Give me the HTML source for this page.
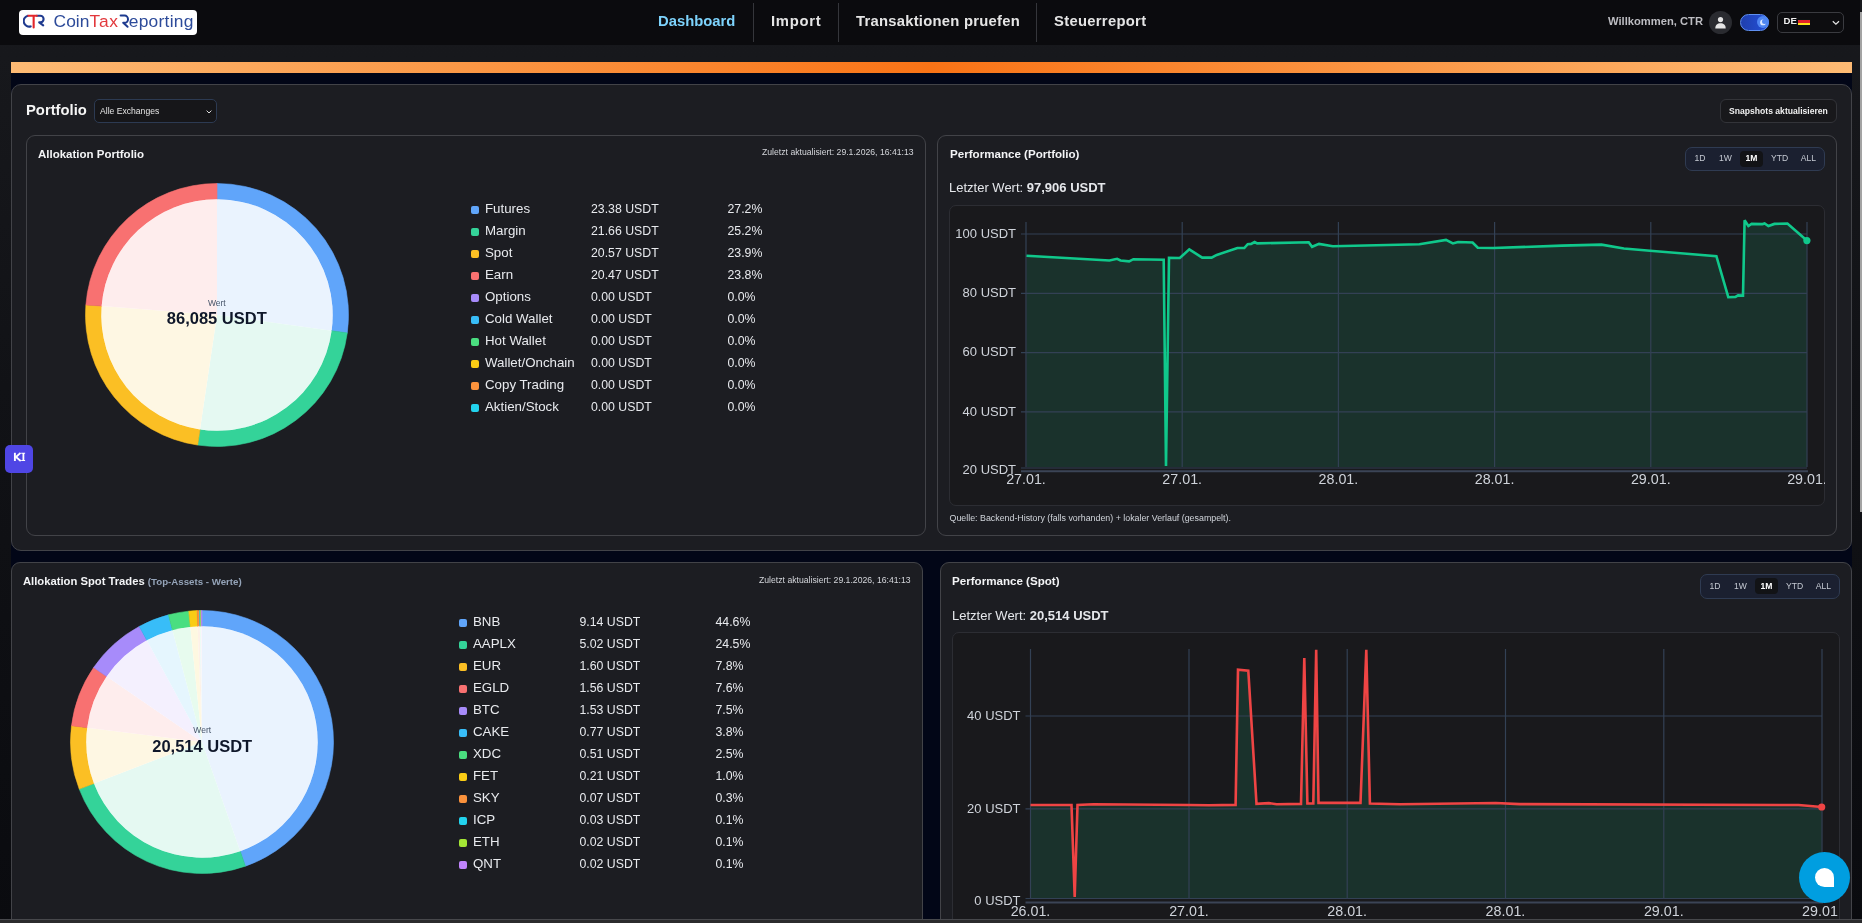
<!DOCTYPE html>
<html><head><meta charset="utf-8">
<style>
*{box-sizing:border-box;margin:0;padding:0}
html,body{width:1862px;height:923px;overflow:hidden;background:linear-gradient(180deg,#18191d 0,#111216 42%,#0a0b0f 100%);font-family:"Liberation Sans",sans-serif;color:#f3f4f6}
.a{position:absolute}
#wrap{position:absolute;left:0;top:0;width:1862px;height:923px;will-change:transform}
#hdr{left:0;top:0;width:1860px;height:45px;background:#0b0b0e}
.nav{top:13px;font-weight:bold;font-size:14.8px;color:#e5e5e5;white-space:nowrap;line-height:17px}
.sep{top:3px;width:1px;height:39px;background:#35363b}
.card{border:1px solid #424348;border-radius:9px;background:#1c1d22}
.t{white-space:nowrap;line-height:1}
.lg{font-size:13.3px;color:#e8eaee;white-space:nowrap;line-height:1}
.lv{font-size:12.3px}
.dot{width:8px;height:8px;border-radius:2px}
.seg{border:1px solid #2f3b52;background:#1b2030;border-radius:7px}
.seg span{position:absolute;top:6px;font-size:8.6px;color:#c5c9d2;line-height:1;transform:translateX(-50%)}
.seg .on{background:#121316;border-radius:4px}
.cbox{border:1px solid #2c2d33;border-radius:7px;background:#19191c;overflow:hidden}
.ax{font-size:13px;fill:#cfd3da;font-family:"Liberation Sans",sans-serif}
</style></head><body><div id="wrap">
<!-- header -->
<div id="hdr" class="a"></div>
<div class="a" style="left:19px;top:10px;width:178px;height:25px;background:#fff;border-radius:4px"></div>
<svg class="a" style="left:23px;top:13px" width="22" height="16" viewBox="0 0 22 16">
 <path d="M4.8 2.7 A5.5 5.5 0 0 0 7.7 13.4" fill="none" stroke="#1f3a8f" stroke-width="2.1" stroke-linecap="round"/>
 <path d="M13.8 2.8 H17.3 A3.3 3.3 0 0 1 17.3 9.4 H16.2 L20.2 12.4" fill="none" stroke="#1f3a8f" stroke-width="2.1" stroke-linecap="round" stroke-linejoin="round"/>
 <path d="M5.4 2.8 H13.8 M10.65 2.8 V14.5" fill="none" stroke="#e3262b" stroke-width="2.1" stroke-linecap="round"/>
</svg>
<div class="a t" style="left:53.6px;top:13px;font-size:17.4px;color:#2d4b9a">Coin</div>
<div class="a t" style="left:89.6px;top:13px;font-size:17.4px;color:#e2383c;letter-spacing:0.7px">Tax</div>
<div class="a t" style="left:128.8px;top:13px;font-size:17.4px;color:#2d4b9a;letter-spacing:0.24px">eporting</div>
<svg class="a" style="left:118px;top:13px" width="14" height="16" viewBox="118 13 14 16"><path d="M120.6 15.6 H124.6 A3.4 3.6 0 0 1 124.6 22.8 H123.2 L127.6 26.8" fill="none" stroke="#1d3a8f" stroke-width="2.0" stroke-linecap="round" stroke-linejoin="round"/></svg>

<div class="a nav" style="left:658px;color:#7dd3fc">Dashboard</div>
<div class="a sep" style="left:753px"></div>
<div class="a nav" style="left:771px;letter-spacing:0.75px">Import</div>
<div class="a sep" style="left:838px"></div>
<div class="a nav" style="left:856px;letter-spacing:0.25px">Transaktionen pruefen</div>
<div class="a sep" style="left:1036px"></div>
<div class="a nav" style="left:1054px;letter-spacing:0.3px">Steuerreport</div>

<div class="a t" style="left:1608px;top:16px;font-size:11.2px;font-weight:bold;color:#bdbdc2">Willkommen, CTR</div>
<div class="a" style="left:1709px;top:11px;width:23px;height:23px;border-radius:50%;background:#2a2b30"></div>
<svg class="a" style="left:1709px;top:11px" width="23" height="23" viewBox="0 0 23 23">
 <circle cx="11.5" cy="8.6" r="2.6" fill="#e5e5e5"/>
 <path d="M6.3 17.5 C6.3 13.8 8.5 12.3 11.5 12.3 C14.5 12.3 16.7 13.8 16.7 17.5 Z" fill="#e5e5e5"/>
</svg>
<div class="a" style="left:1740px;top:14px;width:29px;height:17px;border-radius:9px;border:1px solid #5f8ff0;background:linear-gradient(90deg,#1f3fae,#2450d8)"></div>
<div class="a" style="left:1757px;top:15.5px;width:12px;height:12px;border-radius:50%;background:#4f86f2"></div>
<svg class="a" style="left:1757px;top:16px" width="12" height="12" viewBox="0 0 12 12"><circle cx="6" cy="6.4" r="2.9" fill="#dbe7ff"/><circle cx="7.5" cy="5.6" r="2.5" fill="#4f86f2"/></svg>
<div class="a" style="left:1777px;top:12px;width:67px;height:21px;border:1px solid #3a3b40;border-radius:5px;background:#0d0d10"></div>
<div class="a t" style="left:1783.5px;top:16.2px;font-size:9.6px;font-weight:bold;color:#f0f0f0">DE</div>
<div class="a" style="left:1798px;top:18.6px;width:12px;height:6.6px;background:linear-gradient(#0d1212 0 20%,#e52329 20% 62%,#fde21a 62%)"></div>
<svg class="a" style="left:1831px;top:19px" width="10" height="7" viewBox="0 0 10 7"><path d="M1.8 2.2 L4.9 5.2 L8 2.2" fill="none" stroke="#e5e5e5" stroke-width="1.2"/></svg>
<div class="a" style="left:1860px;top:12px;width:2px;height:500px;background:#a3a3a3"></div>

<!-- orange bar / navy -->
<div class="a" style="left:11px;top:62px;width:1841px;height:11px;background:linear-gradient(90deg,#fdba74,#f97316 50%,#fdba74)"></div>
<div class="a" style="left:11px;top:73px;width:1841px;height:850px;background:#020617"></div>

<!-- PORTFOLIO OUTER -->
<div class="a card" style="left:11px;top:84px;width:1841px;height:467px;border-radius:10px"></div>
<div class="a t" style="left:26px;top:102.5px;font-size:14.8px;font-weight:bold;color:#f5f5f5">Portfolio</div>
<div class="a" style="left:94px;top:99px;width:123px;height:24px;border:1px solid #2c3a52;border-radius:5px;background:#161619"></div>
<div class="a t" style="left:100px;top:107px;font-size:8.6px;color:#e5e5e5">Alle Exchanges</div>
<svg class="a" style="left:205px;top:108.5px" width="8" height="6" viewBox="0 0 8 6"><path d="M1.6 1.6 L4 4 L6.4 1.6" fill="none" stroke="#ddd" stroke-width="1"/></svg>
<div class="a" style="left:1720px;top:99px;width:117px;height:24px;border:1px solid #333439;border-radius:6px;background:#18181b"></div>
<div class="a t" style="left:1729px;top:107px;font-size:8.6px;font-weight:bold;color:#f0f0f0">Snapshots aktualisieren</div>

<!-- Allokation Portfolio card -->
<div class="a card" style="left:26px;top:135px;width:900px;height:401px"></div>
<div class="a t" style="left:38px;top:149px;font-size:11.5px;font-weight:bold;color:#f3f4f6">Allokation Portfolio</div>
<div class="a t" style="left:762px;top:148px;font-size:8.67px;color:#d4d6db">Zuletzt aktualisiert: 29.1.2026, 16:41:13</div>
<svg class="a" style="left:83.80000000000001px;top:181.5px" width="266" height="266" viewBox="0 0 266 266"><circle cx="133.0" cy="133.0" r="116.7" fill="#fff"/><path d="M133.00 1.50 A131.5 131.5 0 0 1 263.28 150.90 L247.62 148.75 A115.7 115.7 0 0 0 133.00 17.30Z" fill="#60a5fa" stroke="#60a5fa" stroke-width="0.6"/><path d="M133.0 133.0 L133.00 17.30 A115.7 115.7 0 0 1 247.62 148.75Z" fill="#eaf3fe"/><path d="M263.28 150.90 A131.5 131.5 0 0 1 113.67 263.07 L116.00 247.44 A115.7 115.7 0 0 0 247.62 148.75Z" fill="#34d399" stroke="#34d399" stroke-width="0.6"/><path d="M133.0 133.0 L247.62 148.75 A115.7 115.7 0 0 1 116.00 247.44Z" fill="#e5f9f2"/><path d="M113.67 263.07 A131.5 131.5 0 0 1 1.89 122.90 L17.64 124.11 A115.7 115.7 0 0 0 116.00 247.44Z" fill="#fbbf24" stroke="#fbbf24" stroke-width="0.6"/><path d="M133.0 133.0 L116.00 247.44 A115.7 115.7 0 0 1 17.64 124.11Z" fill="#fef7e3"/><path d="M1.89 122.90 A131.5 131.5 0 0 1 133.00 1.50 L133.00 17.30 A115.7 115.7 0 0 0 17.64 124.11Z" fill="#f87171" stroke="#f87171" stroke-width="0.6"/><path d="M133.0 133.0 L17.64 124.11 A115.7 115.7 0 0 1 133.00 17.30Z" fill="#feeded"/></svg><div class="a t" style="left:166.8px;width:100px;text-align:center;top:298.5px;font-size:8.5px;color:#475569">Wert</div><div class="a t" style="left:136.8px;width:160px;text-align:center;top:309.8px;font-size:16.5px;font-weight:bold;color:#0f172a">86,085 USDT</div>
<div class="a dot" style="left:471px;top:205.5px;background:#60a5fa"></div><div class="a lg" style="left:485px;top:201.75px">Futures</div><div class="a lg lv" style="left:591px;top:202.6px">23.38 USDT</div><div class="a lg lv" style="left:727.5px;top:202.6px">27.2%</div><div class="a dot" style="left:471px;top:227.5px;background:#34d399"></div><div class="a lg" style="left:485px;top:223.75px">Margin</div><div class="a lg lv" style="left:591px;top:224.6px">21.66 USDT</div><div class="a lg lv" style="left:727.5px;top:224.6px">25.2%</div><div class="a dot" style="left:471px;top:249.5px;background:#fbbf24"></div><div class="a lg" style="left:485px;top:245.75px">Spot</div><div class="a lg lv" style="left:591px;top:246.6px">20.57 USDT</div><div class="a lg lv" style="left:727.5px;top:246.6px">23.9%</div><div class="a dot" style="left:471px;top:271.5px;background:#f87171"></div><div class="a lg" style="left:485px;top:267.75px">Earn</div><div class="a lg lv" style="left:591px;top:268.6px">20.47 USDT</div><div class="a lg lv" style="left:727.5px;top:268.6px">23.8%</div><div class="a dot" style="left:471px;top:293.5px;background:#a78bfa"></div><div class="a lg" style="left:485px;top:289.75px">Options</div><div class="a lg lv" style="left:591px;top:290.6px">0.00 USDT</div><div class="a lg lv" style="left:727.5px;top:290.6px">0.0%</div><div class="a dot" style="left:471px;top:315.5px;background:#38bdf8"></div><div class="a lg" style="left:485px;top:311.75px">Cold Wallet</div><div class="a lg lv" style="left:591px;top:312.6px">0.00 USDT</div><div class="a lg lv" style="left:727.5px;top:312.6px">0.0%</div><div class="a dot" style="left:471px;top:337.5px;background:#4ade80"></div><div class="a lg" style="left:485px;top:333.75px">Hot Wallet</div><div class="a lg lv" style="left:591px;top:334.6px">0.00 USDT</div><div class="a lg lv" style="left:727.5px;top:334.6px">0.0%</div><div class="a dot" style="left:471px;top:359.5px;background:#facc15"></div><div class="a lg" style="left:485px;top:355.75px">Wallet/Onchain</div><div class="a lg lv" style="left:591px;top:356.6px">0.00 USDT</div><div class="a lg lv" style="left:727.5px;top:356.6px">0.0%</div><div class="a dot" style="left:471px;top:381.5px;background:#fb923c"></div><div class="a lg" style="left:485px;top:377.75px">Copy Trading</div><div class="a lg lv" style="left:591px;top:378.6px">0.00 USDT</div><div class="a lg lv" style="left:727.5px;top:378.6px">0.0%</div><div class="a dot" style="left:471px;top:403.5px;background:#22d3ee"></div><div class="a lg" style="left:485px;top:399.75px">Aktien/Stock</div><div class="a lg lv" style="left:591px;top:400.6px">0.00 USDT</div><div class="a lg lv" style="left:727.5px;top:400.6px">0.0%</div>

<!-- Performance Portfolio card -->
<div class="a card" style="left:937px;top:135px;width:900px;height:401px"></div>
<div class="a t" style="left:950px;top:148px;font-size:11.6px;font-weight:bold;color:#f3f4f6">Performance (Portfolio)</div>
<div class="a seg" style="left:1685px;top:147px;width:140px;height:24px"><div class="a on" style="left:54px;top:3px;width:23px;height:15.5px"></div><span style="left:14px;top:6px;">1D</span><span style="left:39.5px;top:6px;">1W</span><span style="left:65.5px;top:6px;color:#fff;font-weight:bold">1M</span><span style="left:93.5px;top:6px;">YTD</span><span style="left:122.5px;top:6px;">ALL</span></div>
<div class="a t" style="left:949px;top:181px;font-size:13px;color:#e5e7eb">Letzter Wert: <b>97,906 USDT</b></div>
<div class="a cbox" style="left:949px;top:205px;width:876px;height:301px"></div>
<svg class="a" style="left:950px;top:206px" width="874.6" height="299" viewBox="950 206 874.6 299"><path d="M1026.5 467 L1026.5 255.7 1109.4 260.5 1117.1 258.8 1120.5 260.5 1129.1 261.4 1133.4 259.2 1163.7 259.7 1166.0 466.0 1169.0 257.8 1179.8 258.0 1189.3 249.4 1202.2 257.6 1211.6 257.6 1216.8 254.9 1237.4 248.0 1244.3 248.0 1247.7 244.2 1251.1 243.9 1254.6 242.0 1257.2 243.4 1308.7 242.2 1312.1 246.8 1319.0 243.9 1332.8 246.3 1419.4 244.2 1446.0 239.9 1452.9 243.4 1458.0 242.0 1472.6 242.5 1477.8 247.7 1493.3 248.0 1562.0 245.6 1601.5 244.6 1623.9 248.5 1650.0 250.7 1716.4 256.1 1728.3 297.2 1735.4 296.9 1738.1 295.4 1743.0 295.6 1744.6 220.3 1748.4 226.0 1751.6 223.9 1762.5 224.1 1764.6 223.5 1768.4 226.0 1774.4 223.9 1787.4 223.5 1806.9 240.6 L1806.9 467Z" fill="#1a322c"/><line x1="1021" x2="1807" y1="234" y2="234" stroke="#334155" stroke-width="1.2"/><line x1="1021" x2="1807" y1="293.3" y2="293.3" stroke="#334155" stroke-width="1.2"/><line x1="1021" x2="1807" y1="352.6" y2="352.6" stroke="#334155" stroke-width="1.2"/><line x1="1021" x2="1807" y1="411.9" y2="411.9" stroke="#334155" stroke-width="1.2"/><line x1="1021" x2="1807" y1="468" y2="468" stroke="#334155" stroke-width="1.2"/><line x1="1026" x2="1026" y1="222" y2="467" stroke="#334155" stroke-width="1.2"/><line x1="1182.2" x2="1182.2" y1="222" y2="467" stroke="#334155" stroke-width="1.2"/><line x1="1338.4" x2="1338.4" y1="222" y2="467" stroke="#334155" stroke-width="1.2"/><line x1="1494.6" x2="1494.6" y1="222" y2="467" stroke="#334155" stroke-width="1.2"/><line x1="1650.8" x2="1650.8" y1="222" y2="467" stroke="#334155" stroke-width="1.2"/><line x1="1807" x2="1807" y1="222" y2="467" stroke="#334155" stroke-width="1.2"/><line x1="1021" x2="1808" y1="471.2" y2="471.2" stroke="#3b4456" stroke-width="2"/><polyline points="1026.5 255.7 1109.4 260.5 1117.1 258.8 1120.5 260.5 1129.1 261.4 1133.4 259.2 1163.7 259.7 1166.0 466.0 1169.0 257.8 1179.8 258.0 1189.3 249.4 1202.2 257.6 1211.6 257.6 1216.8 254.9 1237.4 248.0 1244.3 248.0 1247.7 244.2 1251.1 243.9 1254.6 242.0 1257.2 243.4 1308.7 242.2 1312.1 246.8 1319.0 243.9 1332.8 246.3 1419.4 244.2 1446.0 239.9 1452.9 243.4 1458.0 242.0 1472.6 242.5 1477.8 247.7 1493.3 248.0 1562.0 245.6 1601.5 244.6 1623.9 248.5 1650.0 250.7 1716.4 256.1 1728.3 297.2 1735.4 296.9 1738.1 295.4 1743.0 295.6 1744.6 220.3 1748.4 226.0 1751.6 223.9 1762.5 224.1 1764.6 223.5 1768.4 226.0 1774.4 223.9 1787.4 223.5 1806.9 240.6" fill="none" stroke="#10c88b" stroke-width="2.6" stroke-linejoin="miter" stroke-miterlimit="3"/><circle cx="1806.9" cy="240.6" r="3.6" fill="#10c88b"/><text class="ax" x="1016" y="237.8" text-anchor="end">100 USDT</text><text class="ax" x="1016" y="297.1" text-anchor="end">80 USDT</text><text class="ax" x="1016" y="356.40000000000003" text-anchor="end">60 USDT</text><text class="ax" x="1016" y="415.7" text-anchor="end">40 USDT</text><text class="ax" x="1016" y="474.3" text-anchor="end">20 USDT</text><text class="ax" x="1026" y="484.4" text-anchor="middle" style="font-size:14.3px">27.01.</text><text class="ax" x="1182.2" y="484.4" text-anchor="middle" style="font-size:14.3px">27.01.</text><text class="ax" x="1338.4" y="484.4" text-anchor="middle" style="font-size:14.3px">28.01.</text><text class="ax" x="1494.6" y="484.4" text-anchor="middle" style="font-size:14.3px">28.01.</text><text class="ax" x="1650.8" y="484.4" text-anchor="middle" style="font-size:14.3px">29.01.</text><text class="ax" x="1807" y="484.4" text-anchor="middle" style="font-size:14.3px">29.01.</text></svg>
<div class="a t" style="left:949.5px;top:514px;font-size:8.86px;color:#d1d5db">Quelle: Backend-History (falls vorhanden) + lokaler Verlauf (gesampelt).</div>

<!-- SPOT SECTION -->
<div class="a card" style="left:11px;top:562px;width:912px;height:400px"></div>
<div class="a t" style="left:23px;top:576px;font-size:11.24px;font-weight:bold;color:#f3f4f6">Allokation Spot Trades <span style="font-size:9.7px;color:#94a3b8">(Top-Assets - Werte)</span></div>
<div class="a t" style="left:759px;top:576px;font-size:8.67px;color:#d4d6db">Zuletzt aktualisiert: 29.1.2026, 16:41:13</div>
<svg class="a" style="left:69.19999999999999px;top:609.3px" width="266" height="266" viewBox="0 0 266 266"><circle cx="133.0" cy="133.0" r="116.7" fill="#fff"/><path d="M133.00 1.50 A131.5 131.5 0 0 1 176.42 257.13 L171.20 242.21 A115.7 115.7 0 0 0 133.00 17.30Z" fill="#60a5fa" stroke="#60a5fa" stroke-width="0.6"/><path d="M133.0 133.0 L133.00 17.30 A115.7 115.7 0 0 1 171.20 242.21Z" fill="#eaf3fe"/><path d="M176.42 257.13 A131.5 131.5 0 0 1 10.23 180.11 L24.98 174.45 A115.7 115.7 0 0 0 171.20 242.21Z" fill="#34d399" stroke="#34d399" stroke-width="0.6"/><path d="M133.0 133.0 L171.20 242.21 A115.7 115.7 0 0 1 24.98 174.45Z" fill="#e5f9f2"/><path d="M10.23 180.11 A131.5 131.5 0 0 1 2.51 116.71 L18.19 118.67 A115.7 115.7 0 0 0 24.98 174.45Z" fill="#fbbf24" stroke="#fbbf24" stroke-width="0.6"/><path d="M133.0 133.0 L24.98 174.45 A115.7 115.7 0 0 1 18.19 118.67Z" fill="#fef7e3"/><path d="M2.51 116.71 A131.5 131.5 0 0 1 24.63 58.51 L37.65 67.46 A115.7 115.7 0 0 0 18.19 118.67Z" fill="#f87171" stroke="#f87171" stroke-width="0.6"/><path d="M133.0 133.0 L18.19 118.67 A115.7 115.7 0 0 1 37.65 67.46Z" fill="#feeded"/><path d="M24.63 58.51 A131.5 131.5 0 0 1 70.32 17.40 L77.85 31.29 A115.7 115.7 0 0 0 37.65 67.46Z" fill="#a78bfa" stroke="#a78bfa" stroke-width="0.6"/><path d="M133.0 133.0 L37.65 67.46 A115.7 115.7 0 0 1 77.85 31.29Z" fill="#f4f0fe"/><path d="M70.32 17.40 A131.5 131.5 0 0 1 99.46 5.85 L103.49 21.13 A115.7 115.7 0 0 0 77.85 31.29Z" fill="#38bdf8" stroke="#38bdf8" stroke-width="0.6"/><path d="M133.0 133.0 L77.85 31.29 A115.7 115.7 0 0 1 103.49 21.13Z" fill="#e5f6fe"/><path d="M99.46 5.85 A131.5 131.5 0 0 1 119.79 2.17 L121.38 17.89 A115.7 115.7 0 0 0 103.49 21.13Z" fill="#4ade80" stroke="#4ade80" stroke-width="0.6"/><path d="M133.0 133.0 L103.49 21.13 A115.7 115.7 0 0 1 121.38 17.89Z" fill="#e7fbee"/><path d="M119.79 2.17 A131.5 131.5 0 0 1 128.04 1.59 L128.63 17.38 A115.7 115.7 0 0 0 121.38 17.89Z" fill="#facc15" stroke="#facc15" stroke-width="0.6"/><path d="M133.0 133.0 L121.38 17.89 A115.7 115.7 0 0 1 128.63 17.38Z" fill="#fef8e1"/><path d="M128.04 1.59 A131.5 131.5 0 0 1 130.52 1.52 L130.82 17.32 A115.7 115.7 0 0 0 128.63 17.38Z" fill="#fb923c" stroke="#fb923c" stroke-width="0.6"/><path d="M133.0 133.0 L128.63 17.38 A115.7 115.7 0 0 1 130.82 17.32Z" fill="#fef1e6"/><path d="M130.52 1.52 A131.5 131.5 0 0 1 131.35 1.51 L131.54 17.31 A115.7 115.7 0 0 0 130.82 17.32Z" fill="#22d3ee" stroke="#22d3ee" stroke-width="0.6"/><path d="M133.0 133.0 L130.82 17.32 A115.7 115.7 0 0 1 131.54 17.31Z" fill="#e2f9fd"/><path d="M131.35 1.51 A131.5 131.5 0 0 1 132.17 1.50 L132.27 17.30 A115.7 115.7 0 0 0 131.54 17.31Z" fill="#a3e635" stroke="#a3e635" stroke-width="0.6"/><path d="M133.0 133.0 L131.54 17.31 A115.7 115.7 0 0 1 132.27 17.30Z" fill="#f3fce5"/><path d="M132.17 1.50 A131.5 131.5 0 0 1 133.00 1.50 L133.00 17.30 A115.7 115.7 0 0 0 132.27 17.30Z" fill="#c084fc" stroke="#c084fc" stroke-width="0.6"/><path d="M133.0 133.0 L132.27 17.30 A115.7 115.7 0 0 1 133.00 17.30Z" fill="#f7efff"/></svg><div class="a t" style="left:152.2px;width:100px;text-align:center;top:726px;font-size:8.5px;color:#475569">Wert</div><div class="a t" style="left:122.19999999999999px;width:160px;text-align:center;top:737.8px;font-size:16.5px;font-weight:bold;color:#0f172a">20,514 USDT</div>
<div class="a dot" style="left:459px;top:619px;background:#60a5fa"></div><div class="a lg" style="left:473px;top:615.25px">BNB</div><div class="a lg lv" style="left:579.5px;top:616.1px">9.14 USDT</div><div class="a lg lv" style="left:715.5px;top:616.1px">44.6%</div><div class="a dot" style="left:459px;top:641px;background:#34d399"></div><div class="a lg" style="left:473px;top:637.25px">AAPLX</div><div class="a lg lv" style="left:579.5px;top:638.1px">5.02 USDT</div><div class="a lg lv" style="left:715.5px;top:638.1px">24.5%</div><div class="a dot" style="left:459px;top:663px;background:#fbbf24"></div><div class="a lg" style="left:473px;top:659.25px">EUR</div><div class="a lg lv" style="left:579.5px;top:660.1px">1.60 USDT</div><div class="a lg lv" style="left:715.5px;top:660.1px">7.8%</div><div class="a dot" style="left:459px;top:685px;background:#f87171"></div><div class="a lg" style="left:473px;top:681.25px">EGLD</div><div class="a lg lv" style="left:579.5px;top:682.1px">1.56 USDT</div><div class="a lg lv" style="left:715.5px;top:682.1px">7.6%</div><div class="a dot" style="left:459px;top:707px;background:#a78bfa"></div><div class="a lg" style="left:473px;top:703.25px">BTC</div><div class="a lg lv" style="left:579.5px;top:704.1px">1.53 USDT</div><div class="a lg lv" style="left:715.5px;top:704.1px">7.5%</div><div class="a dot" style="left:459px;top:729px;background:#38bdf8"></div><div class="a lg" style="left:473px;top:725.25px">CAKE</div><div class="a lg lv" style="left:579.5px;top:726.1px">0.77 USDT</div><div class="a lg lv" style="left:715.5px;top:726.1px">3.8%</div><div class="a dot" style="left:459px;top:751px;background:#4ade80"></div><div class="a lg" style="left:473px;top:747.25px">XDC</div><div class="a lg lv" style="left:579.5px;top:748.1px">0.51 USDT</div><div class="a lg lv" style="left:715.5px;top:748.1px">2.5%</div><div class="a dot" style="left:459px;top:773px;background:#facc15"></div><div class="a lg" style="left:473px;top:769.25px">FET</div><div class="a lg lv" style="left:579.5px;top:770.1px">0.21 USDT</div><div class="a lg lv" style="left:715.5px;top:770.1px">1.0%</div><div class="a dot" style="left:459px;top:795px;background:#fb923c"></div><div class="a lg" style="left:473px;top:791.25px">SKY</div><div class="a lg lv" style="left:579.5px;top:792.1px">0.07 USDT</div><div class="a lg lv" style="left:715.5px;top:792.1px">0.3%</div><div class="a dot" style="left:459px;top:817px;background:#22d3ee"></div><div class="a lg" style="left:473px;top:813.25px">ICP</div><div class="a lg lv" style="left:579.5px;top:814.1px">0.03 USDT</div><div class="a lg lv" style="left:715.5px;top:814.1px">0.1%</div><div class="a dot" style="left:459px;top:839px;background:#a3e635"></div><div class="a lg" style="left:473px;top:835.25px">ETH</div><div class="a lg lv" style="left:579.5px;top:836.1px">0.02 USDT</div><div class="a lg lv" style="left:715.5px;top:836.1px">0.1%</div><div class="a dot" style="left:459px;top:861px;background:#c084fc"></div><div class="a lg" style="left:473px;top:857.25px">QNT</div><div class="a lg lv" style="left:579.5px;top:858.1px">0.02 USDT</div><div class="a lg lv" style="left:715.5px;top:858.1px">0.1%</div>

<div class="a card" style="left:940px;top:562px;width:912px;height:400px"></div>
<div class="a t" style="left:952px;top:575px;font-size:11.6px;font-weight:bold;color:#f3f4f6">Performance (Spot)</div>
<div class="a seg" style="left:1700px;top:574px;width:140px;height:25px"><div class="a on" style="left:54px;top:3.2999999999999545px;width:23px;height:15.5px"></div><span style="left:14px;top:6.8px;">1D</span><span style="left:39.5px;top:6.8px;">1W</span><span style="left:65.5px;top:6.8px;color:#fff;font-weight:bold">1M</span><span style="left:93.5px;top:6.8px;">YTD</span><span style="left:122.5px;top:6.8px;">ALL</span></div>
<div class="a t" style="left:952px;top:609px;font-size:13px;color:#e5e7eb">Letzter Wert: <b>20,514 USDT</b></div>
<div class="a cbox" style="left:952px;top:632px;width:888px;height:330px"></div>
<svg class="a" style="left:953px;top:633px" width="886.4" height="290" viewBox="953 633 886.4 290"><path d="M1030.5 898.5 L1030.5 805.0 1071.5 805.0 1074.7 897.0 1077.5 805.0 1093.4 804.2 1189.0 805.0 1209.0 805.3 1235.6 804.9 1238.0 669.7 1248.3 670.6 1256.5 803.9 1268.8 803.1 1276.6 804.3 1301.0 803.9 1304.3 658.0 1307.4 803.5 1313.3 803.5 1316.2 649.8 1318.5 802.9 1360.5 802.9 1366.3 649.8 1369.9 803.5 1400.0 804.2 1495.7 803.0 1519.6 804.1 1798.6 805.0 1821.7 807.0 L1821.7 898.5Z" fill="#1a322c"/><line x1="1025.5" x2="1822" y1="716" y2="716" stroke="#334155" stroke-width="1.2"/><line x1="1025.5" x2="1822" y1="808.8" y2="808.8" stroke="#334155" stroke-width="1.2"/><line x1="1025.5" x2="1822" y1="898.5" y2="898.5" stroke="#334155" stroke-width="1.2"/><line x1="1030.5" x2="1030.5" y1="649" y2="898.5" stroke="#334155" stroke-width="1.2"/><line x1="1189" x2="1189" y1="649" y2="898.5" stroke="#334155" stroke-width="1.2"/><line x1="1347.2" x2="1347.2" y1="649" y2="898.5" stroke="#334155" stroke-width="1.2"/><line x1="1505.5" x2="1505.5" y1="649" y2="898.5" stroke="#334155" stroke-width="1.2"/><line x1="1663.8" x2="1663.8" y1="649" y2="898.5" stroke="#334155" stroke-width="1.2"/><line x1="1822" x2="1822" y1="649" y2="898.5" stroke="#334155" stroke-width="1.2"/><line x1="1025.5" x2="1823" y1="902.6" y2="902.6" stroke="#3b4456" stroke-width="2"/><polyline points="1030.5 805.0 1071.5 805.0 1074.7 897.0 1077.5 805.0 1093.4 804.2 1189.0 805.0 1209.0 805.3 1235.6 804.9 1238.0 669.7 1248.3 670.6 1256.5 803.9 1268.8 803.1 1276.6 804.3 1301.0 803.9 1304.3 658.0 1307.4 803.5 1313.3 803.5 1316.2 649.8 1318.5 802.9 1360.5 802.9 1366.3 649.8 1369.9 803.5 1400.0 804.2 1495.7 803.0 1519.6 804.1 1798.6 805.0 1821.7 807.0" fill="none" stroke="#ef4444" stroke-width="2.6" stroke-linejoin="miter" stroke-miterlimit="3"/><circle cx="1821.7" cy="807" r="3.6" fill="#ef4444"/><text class="ax" x="1020.5" y="719.8" text-anchor="end">40 USDT</text><text class="ax" x="1020.5" y="812.5999999999999" text-anchor="end">20 USDT</text><text class="ax" x="1020.5" y="905.3" text-anchor="end">0 USDT</text><text class="ax" x="1030.5" y="915.8000000000001" text-anchor="middle" style="font-size:14.3px">26.01.</text><text class="ax" x="1189" y="915.8000000000001" text-anchor="middle" style="font-size:14.3px">27.01.</text><text class="ax" x="1347.2" y="915.8000000000001" text-anchor="middle" style="font-size:14.3px">28.01.</text><text class="ax" x="1505.5" y="915.8000000000001" text-anchor="middle" style="font-size:14.3px">28.01.</text><text class="ax" x="1663.8" y="915.8000000000001" text-anchor="middle" style="font-size:14.3px">29.01.</text><text class="ax" x="1822" y="915.8000000000001" text-anchor="middle" style="font-size:14.3px">29.01.</text></svg>

<!-- KI button -->
<div class="a" style="left:5px;top:445px;width:28px;height:28px;border-radius:5px;background:#4f46e5"></div>
<svg class="a" style="left:5px;top:445px" width="28" height="28" viewBox="5 445 28 28"><g fill="none" stroke="#fff">
<path d="M14.9 452.8 V461" stroke-width="1.9"/><path d="M20.5 452.8 L16 457 L20.7 461" stroke-width="1.8"/>
<path d="M21.2 453.3 H25.1 M21.2 460.5 H25.1" stroke-width="1.1"/><path d="M23.4 453 V461" stroke-width="1.8"/></g></svg>

<!-- chat bubble -->
<div class="a" style="left:1799px;top:852px;width:51px;height:51px;border-radius:50%;background:#009ee0"></div>
<div class="a" style="left:1815px;top:868px;width:19px;height:19px;border-radius:10px 10px 0 10px;background:#fff"></div>

<!-- bottom strip -->
<div class="a" style="left:0;top:919px;width:1862px;height:4px;background:#2b2b2d;border-top:1px solid #47484c"></div>
</div></body></html>
